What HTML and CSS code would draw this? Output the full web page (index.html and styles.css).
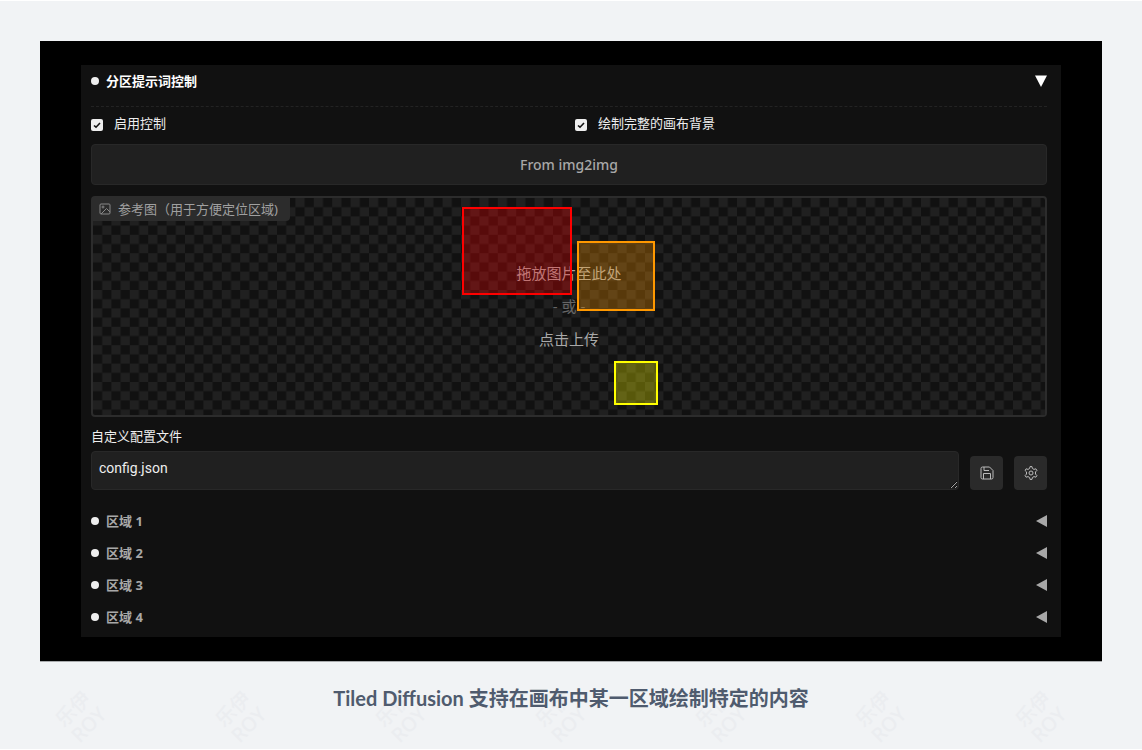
FILE: index.html
```html
<!DOCTYPE html>
<html lang="zh-CN">
<head>
<meta charset="utf-8">
<meta name="viewport" content="width=device-width, initial-scale=1">
<title>Tiled Diffusion</title>
<link rel="stylesheet" href="styles.css">
</head>
<body>
<figure class="figure">
  <div class="frame">
    <main class="panel">
      <h2 class="heading"><button class="fold fold-open" type="button"><span class="dot"></span><span class="fold-label">分区提示词控制</span><svg class="arrow" viewBox="0 0 12 12" aria-hidden="true"><path d="M0 0.5H12L6 12Z"/></svg></button></h2>
      <div class="checks">
        <label class="check"><input type="checkbox" checked><span>启用控制</span></label>
        <label class="check"><input type="checkbox" checked><span>绘制完整的画布背景</span></label>
      </div>
      <button class="wide-button" type="button">From img2img</button>
      <section class="canvas">
        <svg class="checker" aria-hidden="true"><defs><pattern id="checker" width="18.400" height="18.400" patternUnits="userSpaceOnUse"><path fill="#202020" d="M0 0H9.200V18.400H18.400V9.200H0Z"/></pattern></defs><rect width="100%" height="100%" fill="url(#checker)"/></svg>
        <div class="canvas-label">
          <svg class="image-icon" viewBox="0 0 12 12" aria-hidden="true"><rect x="1" y="1" width="10" height="10" rx="1"/><circle cx="4" cy="4" r="1"/><path d="M2 11L7.500 5.500L11 9"/></svg>
          <span>参考图（用于方便定位区域)</span>
        </div>
        <button class="drop" type="button"><span>拖放图片至此处</span><span class="or">- 或 -</span><span>点击上传</span></button>
        <div class="region region-red"></div>
        <div class="region region-orange"></div>
        <div class="region region-yellow"></div>
      </section>
      <label class="field-label" for="config">自定义配置文件</label>
      <div class="config-row">
        <textarea id="config" class="config" rows="1" spellcheck="false">config.json</textarea>
        <button class="tool" type="button" aria-label="保存"><svg viewBox="0 0 14 14" aria-hidden="true"><path d="M2.500 1H9.500L13 4.500V11.500Q13 13 11.500 13H2.500Q1 13 1 11.500V2.500Q1 1 2.500 1ZM4 1V4.500H9M3.500 13V7.500H10.500V13"/></svg></button>
        <button class="tool" type="button" aria-label="设置"><svg viewBox="0 0 14 14" aria-hidden="true"><path d="M6 0.600H8L8.400 2.500L10 3.400L11.900 2.800L12.900 4.500L11.500 5.900V8.100L12.900 9.500L11.900 11.200L10 10.600L8.400 11.500L8 13.400H6L5.600 11.500L4 10.600L2.100 11.200L1.100 9.500L2.500 8.100V5.900L1.100 4.500L2.100 2.800L4 3.400L5.600 2.500Z"/><circle cx="7" cy="7" r="2"/></svg></button>
      </div>
      <div class="folds">
        <button class="fold" type="button"><span class="dot"></span><span class="fold-label">区域 1</span><svg class="arrow" viewBox="0 0 12 12" aria-hidden="true"><path d="M12 0V12L1 6Z"/></svg></button>
        <button class="fold" type="button"><span class="dot"></span><span class="fold-label">区域 2</span><svg class="arrow" viewBox="0 0 12 12" aria-hidden="true"><path d="M12 0V12L1 6Z"/></svg></button>
        <button class="fold" type="button"><span class="dot"></span><span class="fold-label">区域 3</span><svg class="arrow" viewBox="0 0 12 12" aria-hidden="true"><path d="M12 0V12L1 6Z"/></svg></button>
        <button class="fold" type="button"><span class="dot"></span><span class="fold-label">区域 4</span><svg class="arrow" viewBox="0 0 12 12" aria-hidden="true"><path d="M12 0V12L1 6Z"/></svg></button>
      </div>
    </main>
  </div>
  <figcaption class="caption">Tiled Diffusion 支持在画布中某一区域绘制特定的内容</figcaption>
  <div class="watermarks" aria-hidden="true">
    <div class="mark">乐伊<br>ROY</div><div class="mark">乐伊<br>ROY</div><div class="mark">乐伊<br>ROY</div><div class="mark">乐伊<br>ROY</div><div class="mark">乐伊<br>ROY</div><div class="mark">乐伊<br>ROY</div><div class="mark">乐伊<br>ROY</div>
  </div>
</figure>
</body>
</html>
```
FILE: styles.css
```css
* { box-sizing: border-box; }
body {
  margin: 0;
  background: #f1f3f5;
  font-family: "Noto Sans", "Noto Sans CJK SC", sans-serif;
}
button { border: 0; padding: 0; background: none; color: inherit; font: inherit; cursor: pointer; }
.figure { position: relative; margin: 0; padding: 40px 40px 0; min-height: 100vh; border-top: 1px solid #fff; border-bottom: 1px solid #fff; }
.frame { background: #000; padding: 24px 41px; border-bottom: 1px solid #a9abad; }
.panel { background: #111; color: #eee; padding: 0 14px 4px 10px; font-size: 13px; }
.heading { margin: 0; border-bottom: 1px dashed #232323; font-size: 13px; }
.fold { display: flex; align-items: center; width: 100%; height: 32px; text-align: left; color: #a8a8a8; font-size: 13px; font-weight: 700; }
.fold-open { height: 41px; padding-bottom: 9px; color: #fff; }
.fold-label { flex: 1; padding: 0 0 2px 7px; }
.dot { width: 8px; height: 8px; border-radius: 50%; background: #eee; }
.arrow { width: 12px; height: 12px; fill: currentColor; }
.checks { display: grid; grid-template-columns: 1fr 1fr; gap: 12px; padding-top: 7px; }
.check { display: flex; align-items: flex-start; gap: 11px; height: 20px; line-height: 18px; }
.check input {
  appearance: none; width: 12px; height: 12px; margin: 5px 0 0; border-radius: 2px;
  background: #eee url("data:image/svg+xml,%3Csvg xmlns='http://www.w3.org/2000/svg' viewBox='0 0 12 12'%3E%3Cpath d='M3 6.500L5 8.200L9 4' fill='none' stroke='%23111' stroke-width='1.600'/%3E%3C/svg%3E") center / 12px;
}
.wide-button { width: 100%; height: 41px; margin-top: 10px; border: 1px solid #282828; border-radius: 4px; background: #202020; color: #a8a8a8; font-size: 14px; font-weight: 500; }
.canvas { position: relative; height: 221px; margin-top: 11px; border: 2px solid #2c2c2c; border-radius: 4px; }
.checker { position: absolute; inset: 0; width: 100%; height: 100%; }
.canvas-label { position: absolute; top: 0; left: 0; display: flex; align-items: center; gap: 7px; height: 23px; padding: 0 12px 2px 6px; border-bottom-right-radius: 4px; background: #2c2c2c; color: #a0a0a0; font-size: 13px; }
.image-icon { width: 12px; height: 12px; fill: none; stroke: #888; }
.drop { position: relative; display: flex; flex-direction: column; align-items: center; justify-content: center; width: 100%; height: 100%; color: #a8a8a8; font-size: 15px; line-height: 33px; }
.or { color: #666; }
.region { position: absolute; }
.region-red { left: 369px; top: 9px; width: 110px; height: 88px; border: 2px solid #f00; background: rgba(255, 0, 0, 0.300); }
.region-orange { left: 484px; top: 43px; width: 78px; height: 70px; border: 2px solid #ff9800; background: rgba(255, 152, 0, 0.300); }
.region-yellow { left: 521px; top: 163px; width: 44px; height: 44px; border: 2px solid #ff0; background: rgba(255, 255, 0, 0.300); }
.field-label { display: block; height: 20px; margin-top: 10px; line-height: 18px; }
.config-row { display: flex; align-items: flex-end; gap: 11px; margin-top: 4px; }
.config { flex: 1; min-width: 0; height: 39px; margin: 0; padding: 6px 7px; border: 1px solid #282828; border-radius: 4px; background: #202020; color: #eee; font: 14px/20px Roboto, sans-serif; resize: vertical; }
.tool { display: grid; place-items: center; width: 33px; height: 34px; border-radius: 4px; background: #2a2a2a; color: #bbb; }
.tool svg { width: 14px; height: 14px; fill: none; stroke: currentColor; }
.folds { margin-top: 15px; }
.caption { margin-top: 22px; color: #4f5b6e; font: 700 20px/28px Lato, "Noto Sans CJK SC", sans-serif; text-align: center; }
.watermarks { position: absolute; left: 51px; top: 694px; z-index: -1; display: flex; gap: 100px; }
.mark { width: 60px; flex: none; color: #ebedf0; font-size: 20px; font-weight: 500; line-height: 22px; text-align: center; transform: rotate(-45deg); }
```
